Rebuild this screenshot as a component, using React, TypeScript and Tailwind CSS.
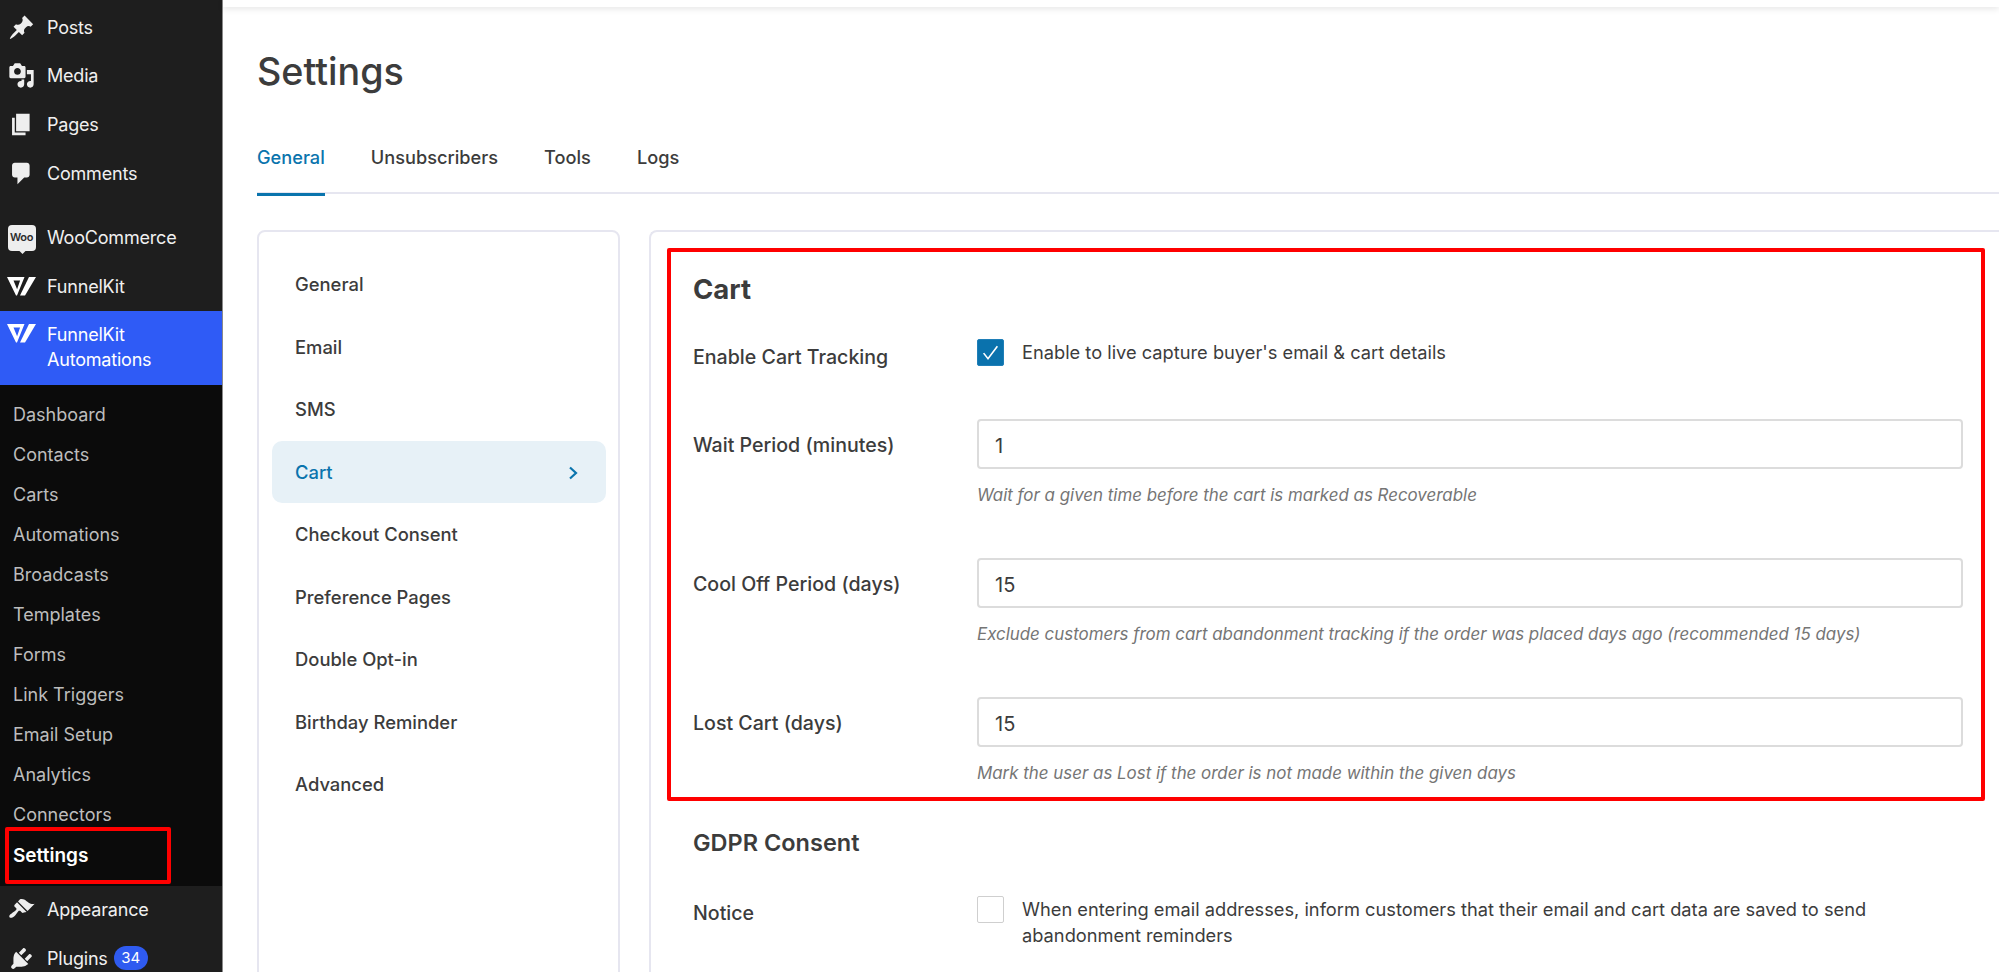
const font = "font-['Inter',sans-serif]";

function Dash({ d }: { d: string }) {
  return (
    <svg viewBox="0 0 20 20" className="h-[27px] w-[27px] shrink-0 fill-[#eeeeee]">
      <path d={d} />
    </svg>
  );
}

function FunnelLogo() {
  return (
    <svg viewBox="0 0 29 19" className="h-[19px] w-[29px] shrink-0 fill-white">
      <path d="M0 0h17.5L10 18.5H9zM6.5 3.5l3.6 8.8 3-8.8z" fillRule="evenodd" />
      <path d="M22 0h7L18 18.5h-5z" />
    </svg>
  );
}

function TopItem({ icon, label, badge }: { icon: React.ReactNode; label: string; badge?: string }) {
  return (
    <div className="flex h-[48.6px] shrink-0 items-center text-[18px] tracking-[-0.2px] text-[#f0f0f0]">
      <div className="flex w-[47px] justify-center pl-[3px] pr-[7px]">{icon}</div>
      <span>{label}</span>
      {badge && (
        <span className="ml-[6px] flex h-[24px] w-[34px] items-center justify-center rounded-full bg-[#2f5bf0] text-[15px] text-white">
          {badge}
        </span>
      )}
    </div>
  );
}

const subItems = [
  "Dashboard",
  "Contacts",
  "Carts",
  "Automations",
  "Broadcasts",
  "Templates",
  "Forms",
  "Link Triggers",
  "Email Setup",
  "Analytics",
  "Connectors",
];

const sideMenu = [
  "General",
  "Email",
  "SMS",
  "Cart",
  "Checkout Consent",
  "Preference Pages",
  "Double Opt-in",
  "Birthday Reminder",
  "Advanced",
];

function Sidebar() {
  return (
    <aside className="flex h-full w-[223px] shrink-0 flex-col overflow-hidden border-r border-[#8a8a8a] bg-[#1e1e1e] pt-[3px]">
      <TopItem label="Posts" icon={<Dash d="M10.44 3.02l1.82-1.82 6.36 6.35-1.83 1.82c-1.05-.68-2.48-.57-3.41.36l-.75.75c-.92.93-1.04 2.35-.35 3.41l-1.83 1.82-2.41-2.41-2.8 2.79c-.42.42-3.38 2.71-3.8 2.29s1.86-3.39 2.28-3.81l2.79-2.79L4.1 9.36l1.83-1.82c1.05.69 2.48.57 3.4-.36l.75-.75c.93-.92 1.05-2.35.36-3.41z" />} />
      <TopItem label="Media" icon={<Dash d="M13 11V4c0-.55-.45-1-1-1h-1.67L9 1H5L3.67 3H2c-.55 0-1 .45-1 1v7c0 .55.45 1 1 1h10c.55 0 1-.45 1-1zM7 4.5c1.38 0 2.5 1.12 2.5 2.5S8.38 9.5 7 9.5 4.5 8.38 4.5 7 5.62 4.5 7 4.5zM14 6h5v10.5c0 1.38-1.12 2.5-2.5 2.5S14 17.88 14 16.5s1.12-2.5 2.5-2.5c.17 0 .34.02.5.05V9h-3V6zm-4 8.05V13h2v3.5c0 1.38-1.12 2.5-2.5 2.5S7 17.88 7 16.5 8.12 14 9.5 14c.17 0 .34.02.5.05z" />} />
      <TopItem label="Pages" icon={<Dash d="M6 15V2h10v13H6zm-1 1h8v2H3V5h2v11z" />} />
      <TopItem label="Comments" icon={<Dash d="M5 2h9c1.1 0 2 .9 2 2v7c0 1.1-.9 2-2 2h-2l-5 5v-5H5c-1.1 0-2-.9-2-2V4c0-1.1.9-2 2-2z" />} />
      <div className="h-[16px] shrink-0" />
      <TopItem
        label="WooCommerce"
        icon={
          <span className="relative flex h-[26px] w-[28px] items-center justify-center rounded-[4px] bg-[#eeeeee] text-[11px] font-semibold tracking-[-0.3px] text-[#2c2c2c]">
            Woo
            <span className="absolute bottom-[-2px] left-[12px] h-[5px] w-[5px] rotate-45 bg-[#eeeeee]" />
          </span>
        }
      />
      <TopItem label="FunnelKit" icon={<FunnelLogo />} />
      <div className="flex h-[74px] shrink-0 items-start bg-[#2f5bf6] pt-[11px] text-[18px] leading-[25px] tracking-[-0.2px] text-white">
        <div className="flex w-[47px] justify-center pl-[3px] pr-[7px] pt-[2px]">
          <FunnelLogo />
        </div>
        <span>
          FunnelKit
          <br />
          Automations
        </span>
      </div>
      <div className="shrink-0 bg-[#0b0b0b] pb-[11px] pt-[10px] text-[18px] text-[#bdbdbd]">
        {subItems.map((s) => (
          <div key={s} className="flex h-[40px] items-center pl-[13px]">
            {s}
          </div>
        ))}
        <div className="relative flex h-[40px] items-center pl-[13px] pt-[3px] text-[19px] font-semibold text-white">
          Settings
          <div className="absolute left-[5px] top-[-8px] h-[57px] w-[166px] rounded-[2px] border-[4px] border-[#ff0000]" />
        </div>
      </div>
      <TopItem label="Appearance" icon={<Dash d="M14.48 11.06L7.41 3.99l1.5-1.5c.5-.56 2.3-.47 3.51.32 1.21.8 1.43 1.28 2.91 2.1 1.18.64 2.45 1.26 4.45.85zm-.71.71L6.7 4.7 4.93 6.47c-.39.39-.39 1.02 0 1.41l1.06 1.06c.39.39.39 1.03 0 1.42-.6.6-1.43 1.11-2.21 1.69-.35.26-.7.53-1.01.84C1.43 13.23.4 14.98 1.29 15.87c.89.89 2.64-.14 3.98-1.48.31-.31.58-.66.84-1.01.58-.78 1.09-1.61 1.69-2.21.39-.39 1.02-.39 1.41 0l1.06 1.06c.39.39 1.02.39 1.41 0z" />} />
      <TopItem label="Plugins" badge="34" icon={<Dash d="M13.11 4.36L9.87 7.6 8 5.73l3.24-3.24c.35-.34 1.05-.2 1.56.32.52.51.66 1.21.31 1.55zm-8 1.77l.91-1.12 9.01 9.01-1.19.84c-.71.71-2.63 1.16-3.82 1.16H6.14L4.9 17.26c-.59.59-1.54.59-2.12 0-.59-.58-.59-1.53 0-2.12l1.24-1.24v-3.88c0-1.13.4-3.19 1.09-3.89zm7.26 3.97l3.24-3.24c.34-.35 1.04-.21 1.55.31.52.51.66 1.21.31 1.55l-3.24 3.25z" />} />
    </aside>
  );
}

function Checkbox({ checked }: { checked?: boolean }) {
  return (
    <span
      className={
        checked
          ? "flex h-[27px] w-[27px] shrink-0 items-center justify-center rounded-[2px] border border-[#1f7fb8] bg-[#0a72ad]"
          : "h-[27px] w-[27px] shrink-0 rounded-[2px] border border-[#cfcfcf] bg-white"
      }
    >
      {checked && (
        <svg viewBox="0 0 20 20" className="h-[25px] w-[25px] fill-none stroke-white stroke-[1.3]">
          <path d="M4.5 10.5l3.5 4.5 7.5-10" />
        </svg>
      )}
    </span>
  );
}

function NumberField({ label, value, hint, className }: { label: string; value: string; hint: string; className: string }) {
  return (
    <div className={`grid grid-cols-[284px_1fr] ${className}`}>
      <div className="flex h-[50px] items-center pt-[4px] text-[19.6px] font-medium text-[#3c3c3c]">{label}</div>
      <div>
        <div className="flex h-[50px] items-center rounded-[4px] border-2 border-[#dcdcdc] bg-white pl-[16px] pt-[3px] text-[20px] text-[#3c3c3c]">
          {value}
        </div>
        <p className="mt-[16px] text-[16.9px] leading-[20px] italic text-[#757575]">{hint}</p>
      </div>
    </div>
  );
}

export default function App() {
  return (
    <div className={`flex h-[972px] w-full overflow-hidden bg-white ${font}`}>
      <Sidebar />
      <main className="flex min-w-0 flex-1 flex-col pl-[34px]">
        <div className="-ml-[34px] h-[7px] shrink-0 bg-white shadow-[0_2px_6px_rgba(0,0,0,0.1)]" />
        <h1 className="mt-[41px] text-[37.7px] leading-[46px] font-medium text-[#3c3c3c]">Settings</h1>
        <div className="mt-[38px] flex h-[62px] gap-[46px] border-b-2 border-[#e6e6f0] text-[18.2px] font-medium text-[#3c3c3c]">
          <div className="relative flex h-[62px] items-start pt-[12px] text-[#0a74ad]">
            General
            <div className="absolute bottom-[-2px] left-0 right-0 h-[3px] bg-[#0a74ad]" />
          </div>
          <div className="pt-[12px]">Unsubscribers</div>
          <div className="pt-[12px]">Tools</div>
          <div className="pt-[12px]">Logs</div>
        </div>
        <div className="mt-[36px] flex min-h-0 flex-1 gap-[29px]">
          <nav className="h-[760px] w-[363px] shrink-0 rounded-[8px] border-2 border-[#e6e6f0] pl-[13px] pr-[12px] pt-[22px] text-[18.4px] font-medium text-[#3c3c3c]">
            {sideMenu.map((s) =>
              s === "Cart" ? (
                <div key={s} className="-mt-[1px] mb-[1px] flex h-[62.5px] items-center justify-between rounded-[10px] bg-[#e7f1f7] pl-[23px] pr-[27px] pt-[2px] text-[#0a74ad]">
                  {s}
                  <svg viewBox="0 0 12 16" className="h-[16px] w-[12px] fill-none stroke-[#0a74ad] stroke-[2.2]">
                    <path d="M3 2.5L9 8l-6 5.5" />
                  </svg>
                </div>
              ) : (
                <div key={s} className="flex h-[62.5px] items-center pl-[23px]">
                  {s}
                </div>
              )
            )}
          </nav>
          <section className="h-[760px] min-w-0 flex-1 rounded-tl-[8px] border-2 border-r-0 border-[#e6e6f0] pl-[16px] pr-[14px] pt-[16px]">
            <div className="h-[553px] rounded-[2px] border-[4px] border-[#ff0000] pl-[22px] pr-[18px] pt-[21px]">
              <h2 className="text-[27.5px] leading-[32px] font-bold text-[#3c3c3c]">Cart</h2>
              <div className="mt-[34px] grid grid-cols-[284px_1fr]">
                <div className="flex h-[37px] items-center text-[19.6px] font-medium text-[#3c3c3c]">Enable Cart Tracking</div>
                <div className="flex items-start gap-[18px]">
                  <Checkbox checked />
                  <span className="text-[18.25px] leading-[27px] text-[#3c3c3c]">Enable to live capture buyer's email &amp; cart details</span>
                </div>
              </div>
              <NumberField className="mt-[43px]" label="Wait Period (minutes)" value="1" hint="Wait for a given time before the cart is marked as Recoverable" />
              <NumberField className="mt-[53px]" label="Cool Off Period (days)" value="15" hint="Exclude customers from cart abandonment tracking if the order was placed days ago (recommended 15 days)" />
              <NumberField className="mt-[53px]" label="Lost Cart (days)" value="15" hint="Mark the user as Lost if the order is not made within the given days" />
            </div>
            <div className="pl-[26px] pr-[100px]">
              <h2 className="mt-[27px] text-[23.5px] leading-[30px] font-semibold text-[#3c3c3c]">GDPR Consent</h2>
              <div className="mt-[38px] grid grid-cols-[284px_1fr]">
                <div className="flex h-[36px] items-center text-[19.6px] font-medium text-[#3c3c3c]">Notice</div>
                <div className="flex items-start gap-[18px]">
                  <Checkbox />
                  <span className="text-[18.25px] leading-[26px] text-[#3c3c3c]">
                    When entering email addresses, inform customers that their email and cart data are saved to send abandonment reminders
                  </span>
                </div>
              </div>
            </div>
          </section>
        </div>
      </main>
    </div>
  );
}
